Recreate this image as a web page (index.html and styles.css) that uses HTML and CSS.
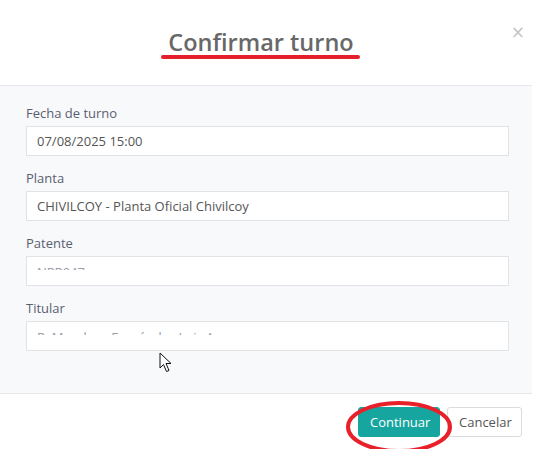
FILE: index.html
```html
<!DOCTYPE html>
<html lang="es">
<head>
<meta charset="utf-8">
<title>Confirmar turno</title>
<link rel="stylesheet" href="styles.css">
</head>
<body>
<div class="modal">
  <div class="modal-header">
    <h2 class="modal-title">Confirmar turno<span class="mark-line"></span></h2>
    <span class="close">&times;</span>
  </div>
  <div class="modal-body">
    <div class="field">
      <label class="field-label">Fecha de turno</label>
      <div class="field-input">07/08/2025 15:00</div>
    </div>
    <div class="field">
      <label class="field-label">Planta</label>
      <div class="field-input">CHIVILCOY - Planta Oficial Chivilcoy</div>
    </div>
    <div class="field">
      <label class="field-label">Patente</label>
      <div class="field-input"><div class="clipped"><span>NPR947</span></div></div>
    </div>
    <div class="field">
      <label class="field-label">Titular</label>
      <div class="field-input"><div class="clipped"><span>R. Mendoza Fernández Luis A.</span></div></div>
    </div>
    <svg class="cursor" width="14" height="21" viewBox="0 0 14 21"><path d="M1 1 L1 16 L4.5 12.5 L7.5 19.5 L10 18.5 L7 11.5 L12 11.5 Z" fill="#fff" stroke="#111" stroke-width="1" stroke-linejoin="miter"/></svg>
  </div>
  <div class="modal-footer">
    <button class="btn btn-primary">Continuar</button>
    <button class="btn btn-default">Cancelar</button>
    <svg class="mark-ellipse" width="112" height="58" viewBox="0 0 112 58"><ellipse cx="56" cy="29" rx="51" ry="24" fill="none" stroke="#e8202a" stroke-width="4"/></svg>
  </div>
</div>
</body>
</html>
```
FILE: styles.css
```css
html, body {
  margin: 0;
  padding: 0;
  background: #fff;
  font-family: "Open Sans", "Noto Sans", sans-serif;
}
.modal {
  width: 532px;
  position: relative;
}
.modal-header {
  height: 85px;
  border-bottom: 1px solid #e6e7ea;
  display: flex;
  justify-content: center;
  position: relative;
}
.modal-title {
  margin: 25px 10px 0 0;
  font-size: 23.5px;
  font-weight: 600;
  color: #686868;
  line-height: 34px;
  height: 34px;
  position: relative;
}
.mark-line {
  position: absolute;
  left: -7px;
  right: -6px;
  top: 30px;
  height: 4px;
  border-radius: 2px;
  background: #e51f2b;
}
.close {
  position: absolute;
  right: 7px;
  top: 22px;
  font-size: 17px;
  line-height: 20px;
  color: #c6c6c6;
  font-family: "DejaVu Sans", sans-serif;
}
.modal-body {
  background: #f8f9fb;
  padding: 18px 23px 42px 26px;
  display: flex;
  flex-direction: column;
  gap: 13px;
  position: relative;
  border-bottom: 1px solid #e6e7ea;
}
.field {
  display: flex;
  flex-direction: column;
}
.field-label {
  font-size: 13px;
  line-height: 18px;
  color: #5b5e70;
  margin-bottom: 4px;
}
.field-input {
  height: 28px;
  border: 1px solid #e2e3e6;
  background: #fff;
  padding: 0 10px;
  font-size: 13px;
  line-height: 28px;
  color: #555;
}
.clipped {
  height: 4px;
  overflow: hidden;
  margin-top: 9px;
  line-height: 13px;
  color: #9a9caa;
}
.clipped span {
  display: block;
}
.cursor {
  position: absolute;
  left: 159px;
  top: 266px;
}
.modal-footer {
  display: flex;
  justify-content: flex-end;
  gap: 7px;
  padding: 13px 10px 12px 0;
  position: relative;
}
.btn {
  height: 30px;
  font-family: "Open Sans", "Noto Sans", sans-serif;
  font-size: 13px;
  border-radius: 3px;
  padding: 0 11px;
  cursor: pointer;
}
.btn-primary {
  background: #17a59f;
  border: 1px solid #17a59f;
  color: #fff;
  width: 82px;
}
.btn-default {
  background: #fff;
  border: 1px solid #dcdcdc;
  color: #555;
  width: 75px;
}
.mark-ellipse {
  position: absolute;
  left: 343px;
  top: 4px;
}
```
